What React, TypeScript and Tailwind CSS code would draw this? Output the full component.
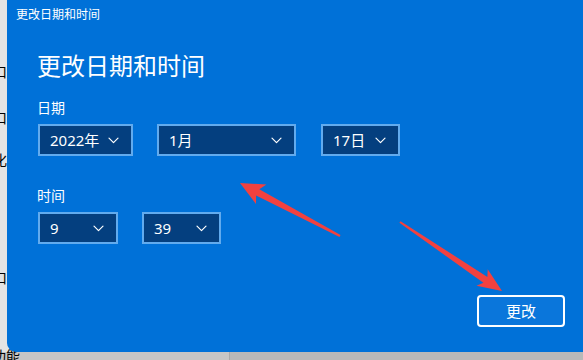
import React from 'react';

// Small chevron used in every dropdown box
const Chevron = () => (
  <svg width="11" height="7" viewBox="0 0 11 7" fill="none" className="shrink-0">
    <path d="M1 1.2l4.5 4.5L10 1.2" stroke="#ffffff" strokeWidth="1.2" strokeLinecap="round" strokeLinejoin="round" />
  </svg>
);

interface DropdownProps {
  value: string;
  width: string;
}

const Dropdown: React.FC<DropdownProps> = ({ value, width }) => (
  <div
    className={`${width} flex h-[32px] items-center justify-between border-2 border-[#62abee] bg-[#043f7f] pl-[10px] pr-[12px] text-[15px] text-white`}
  >
    <span className="leading-none">{value}</span>
    <Chevron />
  </div>
);

// Labels of the settings page sitting behind the dialog
const backgroundRows = [
  { text: '窗口', mt: 'mt-[62px]' },
  { text: '窗口', mt: 'mt-[26px]' },
  { text: '优化', mt: 'mt-[22px]' },
  { text: '窗口', mt: 'mt-[98px]' },
];

export default function App() {
  return (
    <div
      className="relative h-[360px] w-[583px] overflow-hidden bg-[#dcdcdc] text-black"
      style={{ fontFamily: '"Noto Sans", "Noto Sans CJK SC", sans-serif' }}
    >
      {/* settings page behind the modal */}
      <div className="flex h-full flex-col">
        <div className="flex flex-1 flex-col bg-[#e4e4e4]">
          {backgroundRows.map((row, i) => (
            <div key={i} className={`${row.mt} -ml-[21px] h-[20px] text-[14px] leading-[20px]`}>
              {row.text}
            </div>
          ))}
        </div>
        <div className="flex h-[8px]">
          <div className="w-[229px] bg-[#c6c6c6]">
            <div className="-mt-[6px] -ml-[8px] text-[14px] leading-[20px]">功能</div>
          </div>
          <div className="w-px bg-[#a9a9a9]" />
          <div className="flex-1 bg-[#b9b9b9]" />
        </div>
      </div>

      {/* date & time dialog */}
      <div className="absolute left-[7px] top-0 flex h-[352px] w-[600px] flex-col rounded-bl-[9px] bg-[#0071d8] text-white">
        <div className="flex h-[30px] items-center pl-[9px] text-[12px]">更改日期和时间</div>

        <div className="flex flex-col pl-[30px]">
          <h1 className="mt-[20px] h-[32px] text-[24px] leading-[32px]">更改日期和时间</h1>

          <div className="mt-[16px] h-[20px] text-[14px] leading-[20px]">日期</div>
          <div className="ml-px mt-[6px] flex gap-[24px]">
            <Dropdown value="2022年" width="w-[95px]" />
            <Dropdown value="1月" width="w-[139px]" />
            <div className="ml-px">
              <Dropdown value="17日" width="w-[79px]" />
            </div>
          </div>

          <div className="mt-[30px] h-[20px] text-[14px] leading-[20px]">时间</div>
          <div className="ml-px mt-[6px] flex gap-[24px]">
            <Dropdown value="9" width="w-[80px]" />
            <Dropdown value="39" width="w-[79px]" />
          </div>
        </div>

        <div className="mt-auto flex justify-end pb-[25px] pr-[42px]">
          <button className="flex h-[32px] w-[88px] items-center justify-center rounded-[4px] border-2 border-white bg-[#0a76db] text-[15px] text-white">
            更改
          </button>
        </div>
      </div>

      {/* red annotation arrows */}
      <svg className="pointer-events-none absolute inset-0" width="583" height="360" viewBox="0 0 583 360">
        <polygon
          points="240,183 266.4,184.6 259.3,189.3 340.5,235.1 339.5,236.9 256.1,195.5 256,204"
          fill="#f2413f"
        />
        <polygon
          points="502,291 487.7,269.2 487.4,276.9 400.6,221.2 399.4,222.8 483.4,282.7 476.5,285.8"
          fill="#f2413f"
        />
      </svg>
    </div>
  );
}
